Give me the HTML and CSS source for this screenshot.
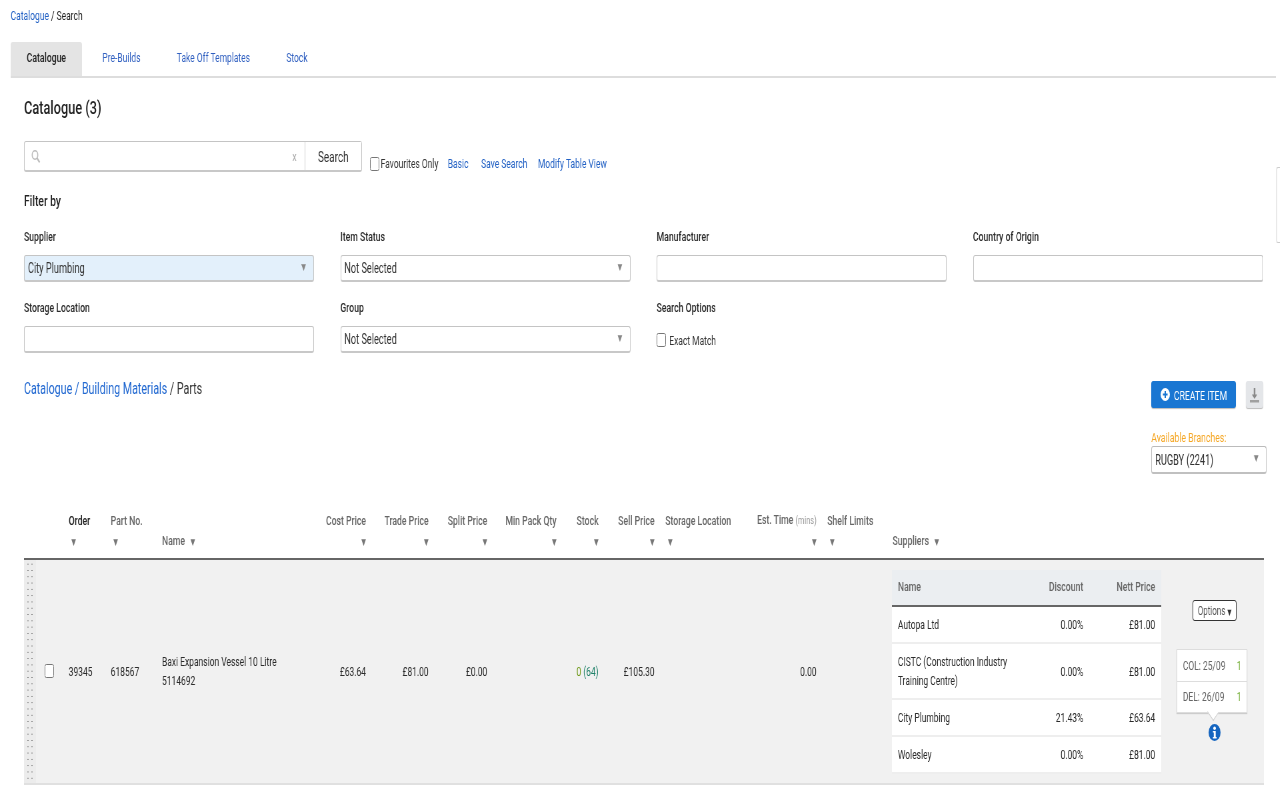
FILE: index.html
```html
<!DOCTYPE html>
<html lang="en">
<head>
<meta charset="utf-8">
<title>Catalogue Search</title>
<link rel="stylesheet" href="styles.css">
</head>
<body>
<div class="page">
  <div class="side-tab"></div>
  <nav class="crumb"><a href="#">Catalogue</a> / Search</nav>
  <ul class="tabs">
    <li class="tab active">Catalogue</li>
    <li class="tab">Pre-Builds</li>
    <li class="tab">Take Off Templates</li>
    <li class="tab">Stock</li>
  </ul>
  <main class="content">
    <h1 class="title">Catalogue (3)</h1>
    <div class="search-row">
      <div class="search-box">
        <svg class="search-icon" width="15" height="13" viewBox="0 0 15 13"><circle cx="6.5" cy="5" r="4.2" fill="none" stroke="#bbb" stroke-width="1.6"/><path d="M9.5 8l4 4.4" stroke="#bbb" stroke-width="2" fill="none"/></svg>
        <span class="search-field"></span>
        <span class="search-clear">x</span>
        <button class="search-btn">Search</button>
      </div>
      <label class="check"><input type="checkbox">Favourites Only</label>
      <a href="#" class="link l1">Basic</a>
      <a href="#" class="link l2">Save Search</a>
      <a href="#" class="link l3">Modify Table View</a>
    </div>
    <h2 class="filter-title">Filter by</h2>
    <div class="filters">
      <div class="field"><div class="label">Supplier</div><div class="input select selected">City Plumbing</div></div>
      <div class="field"><div class="label">Item Status</div><div class="input select">Not Selected</div></div>
      <div class="field"><div class="label">Manufacturer</div><div class="input"></div></div>
      <div class="field"><div class="label">Country of Origin</div><div class="input"></div></div>
      <div class="field"><div class="label">Storage Location</div><div class="input"></div></div>
      <div class="field"><div class="label">Group</div><div class="input select">Not Selected</div></div>
      <div class="field"><div class="label">Search Options</div><label class="check exact"><input type="checkbox">Exact Match</label></div>
    </div>
    <div class="toolbar">
      <div class="path"><a href="#">Catalogue</a> <a href="#">/ Building Materials</a> / Parts</div>
      <div class="actions">
        <div class="action-btns">
          <button class="create">
            <svg width="14" height="13" viewBox="0 0 14 13"><ellipse cx="7" cy="6.5" rx="7" ry="6.5" fill="#fff"/><path d="M7 3v7M3.500 6.500h7" stroke="#1976d2" stroke-width="2"/></svg>
            CREATE ITEM
          </button>
          <button class="download">
            <svg width="16" height="16" viewBox="0 0 16 16"><path d="M8 1v8" stroke="#8a8a8a" stroke-width="2.500"/><path d="M4 7.500h8L8 12z" fill="#8a8a8a"/><rect x="1" y="13" width="14" height="2.500" fill="#a0a0a0"/></svg>
          </button>
        </div>
        <div class="branch-label">Available Branches:</div>
        <div class="input select branch">RUGBY (2241)</div>
      </div>
    </div>
    <table class="grid">
      <colgroup>
        <col class="c-handle"><col class="c-check"><col class="c-order"><col class="c-part"><col class="c-name"><col class="c-cost"><col class="c-trade"><col class="c-split"><col class="c-min"><col class="c-stock"><col class="c-sell"><col class="c-store"><col class="c-est"><col class="c-shelf"><col class="c-supp"><col class="c-opts">
      </colgroup>
      <thead>
        <tr>
          <th></th>
          <th></th>
          <th class="dark">Order<br><span class="sort first">▼</span></th>
          <th>Part No.<br><span class="sort first">▼</span></th>
          <th>Name <span class="sort inline">▼</span></th>
          <th class="num">Cost Price<br><span class="sort">▼</span></th>
          <th class="num">Trade Price<br><span class="sort">▼</span></th>
          <th class="num">Split Price<br><span class="sort">▼</span></th>
          <th class="num">Min Pack Qty<br><span class="sort">▼</span></th>
          <th class="num">Stock<br><span class="sort">▼</span></th>
          <th class="num">Sell Price<br><span class="sort">▼</span></th>
          <th>Storage Location<br><span class="sort first">▼</span></th>
          <th class="num">Est. Time <small>(mins)</small><br><span class="sort">▼</span></th>
          <th>Shelf Limits<br><span class="sort first">▼</span></th>
          <th class="supp-head">Suppliers <span class="sort inline">▼</span></th>
          <th></th>
        </tr>
      </thead>
      <tbody>
        <tr>
          <td class="handle"><div class="dots"></div></td>
          <td class="cell-check"><input type="checkbox"></td>
          <td>39345</td>
          <td>618567</td>
          <td>Baxi Expansion Vessel 10 Litre 5114692</td>
          <td class="num">£63.64</td>
          <td class="num">£81.00</td>
          <td class="num">£0.00</td>
          <td class="num"></td>
          <td class="num stock"><span class="zero">0</span> (64)</td>
          <td class="num">£105.30</td>
          <td></td>
          <td class="num">0.00</td>
          <td></td>
          <td class="cell-supp">
            <table class="suppliers">
              <colgroup><col class="s-name"><col class="s-disc"><col class="s-nett"></colgroup>
              <thead><tr><th>Name</th><th class="num">Discount</th><th class="num">Nett Price</th></tr></thead>
              <tbody>
                <tr><td>Autopa Ltd</td><td class="num">0.00%</td><td class="num">£81.00</td></tr>
                <tr><td>CISTC (Construction Industry Training Centre)</td><td class="num">0.00%</td><td class="num">£81.00</td></tr>
                <tr><td>City Plumbing</td><td class="num">21.43%</td><td class="num">£63.64</td></tr>
                <tr><td>Wolesley</td><td class="num">0.00%</td><td class="num">£81.00</td></tr>
              </tbody>
            </table>
          </td>
          <td class="cell-opts">
            <div class="opts">
              <button class="options">Options <span class="caret">▼</span></button>
              <div class="popup">
                <div class="pop-row"><span>COL: 25/09</span><span class="qty">1</span></div>
                <div class="pop-row"><span>DEL: 26/09</span><span class="qty">1</span></div>
              </div>
              <svg class="info" width="18" height="17" viewBox="0 0 18 17"><ellipse cx="9" cy="8.500" rx="9" ry="8.500" fill="#1565c0"/><ellipse cx="9" cy="4.200" rx="2" ry="1.800" fill="#fff"/><path d="M6.500 7h4.200v6h1.300v1.500H6.500V13h1.300V8.500H6.500z" fill="#fff"/></svg>
            </div>
          </td>
        </tr>
      </tbody>
    </table>
  </main>
</div>
</body>
</html>
```
FILE: styles.css
```css
* { box-sizing: border-box; }
html, body { margin: 0; padding: 0; width: 1280px; height: 800px; overflow: hidden; background: #fff; }
.page {
  position: relative;
  width: 1920px;
  height: 800px;
  overflow: hidden;
  transform: scaleX(0.6666);
  transform-origin: 0 0;
  will-change: transform;
  font: 12.7px/19px Roboto, sans-serif;
  color: #333;
}
a { color: #2160c4; text-decoration: none; }
button { font-family: inherit; cursor: pointer; }

.side-tab { position: absolute; right: 0; top: 167px; width: 5px; height: 76px; border: 1px solid #ccc; border-right: 0; border-radius: 2px 0 0 2px; }

.crumb { height: 26px; padding: 6px 0 0 16px; line-height: 20px; color: #222; }

.tabs { display: flex; gap: 6.500px; list-style: none; height: 36px; margin: 16px 6px 0 16px; padding: 0; border-bottom: 2px solid #ddd; }
.tab { height: 34px; padding: 0 24px; line-height: 32px; color: #2f5fc0; border-radius: 3px 3px 0 0; }
.tab.active { background: #e4e4e4; color: #222; font-size: 13px; font-weight: 500; }

.content { padding: 0 24px 0 36px; }
.title { margin: 18px 0 0; font-size: 19.200px; line-height: 24px; font-weight: 500; color: #222; }

.search-row { display: flex; align-items: flex-end; height: 31px; margin-top: 21px; }
.search-box { display: flex; align-items: center; width: 507px; height: 31px; border: 1px solid #c4c4c4; border-left-width: 1.500px; border-bottom: 2px solid #c8c8c8; border-radius: 3px; }
.search-icon { margin-left: 9px; }
.search-field { flex: 1; }
.search-clear { margin-right: 12px; color: #aaa; font-size: 13px; }
.search-btn { width: 85px; height: 100%; padding: 2px 0 0; border: 0; border-left: 1.500px solid #ccc; background: #fff; color: #333; font-size: 15px; }

.check { display: inline-flex; align-items: center; color: #333; }
.check input { width: 14px; height: 14px; margin: 0 2px 0 0; }
.search-row .check { margin: 0 0 0 12px; height: 17px; }
.link { height: 17px; line-height: 17px; }
.l1 { margin-left: 14px; }
.l2 { margin-left: 19px; }
.l3 { margin-left: 16px; }

.filter-title { margin: 19px 0 0; font-size: 15.500px; line-height: 20px; font-weight: 500; color: #222; }
.filters { display: grid; grid-template-columns: repeat(4, 435px); column-gap: 39.500px; row-gap: 16px; margin-top: 16px; }
.label { height: 20px; line-height: 20px; font-size: 13px; font-weight: 500; color: #2a2a2a; }
.input { position: relative; height: 27px; margin-top: 8px; padding: 0 5px; line-height: 24px; font-size: 13.800px; color: #333; background: #fff; border: 1px solid #c4c4c4; border-left-width: 1.500px; border-right-width: 1.500px; border-bottom: 2px solid #c8c8c8; border-radius: 3px; }
.select::after { content: "▼"; position: absolute; right: 11px; top: 0; font: 9px/22px "DejaVu Sans", sans-serif; color: #888; }
.selected { background: #e3f0fb; }
.exact { margin-top: 12px; height: 20px; }
.exact input { margin-right: 5px; }

.toolbar { display: flex; justify-content: space-between; align-items: flex-start; margin-top: 25px; }
.path { padding-top: 1px; font-size: 16px; line-height: 20px; color: #333; }
.path a { color: #1e66d0; }
.actions { width: 173px; margin: 3px -4px 0 0; }
.action-btns { display: flex; gap: 15px; }
.create { display: flex; align-items: center; gap: 6px; width: 127px; height: 27px; padding: 2px 0 0 14px; border: 0; border-radius: 3px; background: #1976d2; color: #fff; font-size: 13px; box-shadow: 0 1px 1px #bbb; }
.create svg { margin-top: -2px; }
.download { display: flex; align-items: center; justify-content: center; width: 26px; height: 27px; padding: 0; border: 0; border-radius: 3px; background: #e4e6e9; box-shadow: 0 1px 1px #bbb; }
.branch-label { margin-top: 20px; height: 18px; line-height: 19px; font-size: 13px; color: #f5a623; white-space: nowrap; }
.branch { margin-top: 0; height: 28px; line-height: 26px; border-color: #bbb; border-bottom-color: #c0c0c0; }

.grid { border-collapse: separate; border-spacing: 0; table-layout: fixed; width: 1860px; margin-top: 36px; background: #f1f1f1; }
.c-handle { width: 18px; } .c-check { width: 41px; } .c-order { width: 63px; } .c-part { width: 77px; }
.c-name { width: 230px; } .c-cost { width: 92px; } .c-trade { width: 94px; } .c-split { width: 88px; }
.c-min { width: 104px; } .c-stock { width: 63px; } .c-sell { width: 84px; } .c-store { width: 135px; }
.c-est { width: 108px; } .c-shelf { width: 97px; } .c-supp { width: 421px; } .c-opts { width: 145px; }

.grid > thead { background: #fff; }
.grid > thead th { height: 48px; padding: 0 8px 6px; vertical-align: bottom; text-align: left; font-size: 13px; font-weight: 500; line-height: 20px; color: #666; white-space: nowrap; border-bottom: 2px solid #666; }
.grid > thead th.dark { color: #222; }
.grid > thead th.num, .grid td.num, .suppliers th.num { text-align: right; }
.grid > thead th.supp-head { padding-left: 9px; }
.grid small { font-size: 11px; font-weight: 400; color: #999; }
.sort { font: 9px/20px "DejaVu Sans", sans-serif; color: #777; }
.sort.first { margin-left: 4px; }
.sort.inline { margin-left: 5px; }

.grid > tbody > tr > td { padding: 10px 8px 11px; vertical-align: middle; border-bottom: 2px solid #e0e0e0; color: #2a2a2a; }
.grid > tbody > tr > td.handle { padding: 0; background: #ececec; }
.dots { width: 12px; height: 221px; margin: 0 0 0 3px; background-image: radial-gradient(circle, #888 0.7px, transparent 1px); background-size: 6px 6.300px; }
.grid > tbody > tr > td.cell-check { padding: 0 0 2px 13px; }
.cell-check input { display: block; width: 14px; height: 14px; margin: 0; }
.grid > tbody > tr > td.stock { color: #1d8068; }
.zero { color: #6f9a1a; }
.grid > tbody > tr > td.cell-supp { padding: 10px 8px 9px; }

.suppliers { border-collapse: separate; border-spacing: 0; table-layout: fixed; width: 404px; background: linear-gradient(#ebeef1 35px, #fff 35px); }
.s-name { width: 202px; } .s-disc { width: 94px; } .s-nett { width: 108px; }
.suppliers th { height: 37px; padding: 0 9px 2px; text-align: left; font-size: 13px; font-weight: 500; color: #666; border-bottom: 2px solid #666; }
.suppliers td { padding: 8px 9px; border-bottom: 2px solid #eee; color: #2a2a2a; }

.grid > tbody > tr > td.cell-opts { padding: 40px 3px 0 0; vertical-align: top; }
.opts { display: flex; flex-direction: column; align-items: center; }
.options { height: 21px; width: 66px; padding: 0; border: 1px solid #333; border-radius: 3px; background: #fff; color: #555; font-size: 12px; white-space: nowrap; }
.caret { font: 8px "DejaVu Sans", sans-serif; color: #333; }
.popup { position: relative; width: 106px; height: 64px; margin: 28px 0 0 -9px; background: #fff; border: 1px solid #ddd; box-shadow: 0 1px 1px #ccc; }
.popup::after { content: ""; position: absolute; left: 46px; bottom: -7px; width: 14px; height: 12px; background: #fff; border-right: 1px solid #ccc; border-bottom: 1px solid #ccc; transform: rotate(45deg) scale(0.85); }
.pop-row { display: flex; justify-content: space-between; height: 31px; padding: 0 7px 0 9px; line-height: 31px; color: #666; white-space: nowrap; }
.pop-row + .pop-row { border-top: 1px solid #ddd; line-height: 30px; }
.qty { color: #7cb342; }
.info { margin-top: 11px; }
```
